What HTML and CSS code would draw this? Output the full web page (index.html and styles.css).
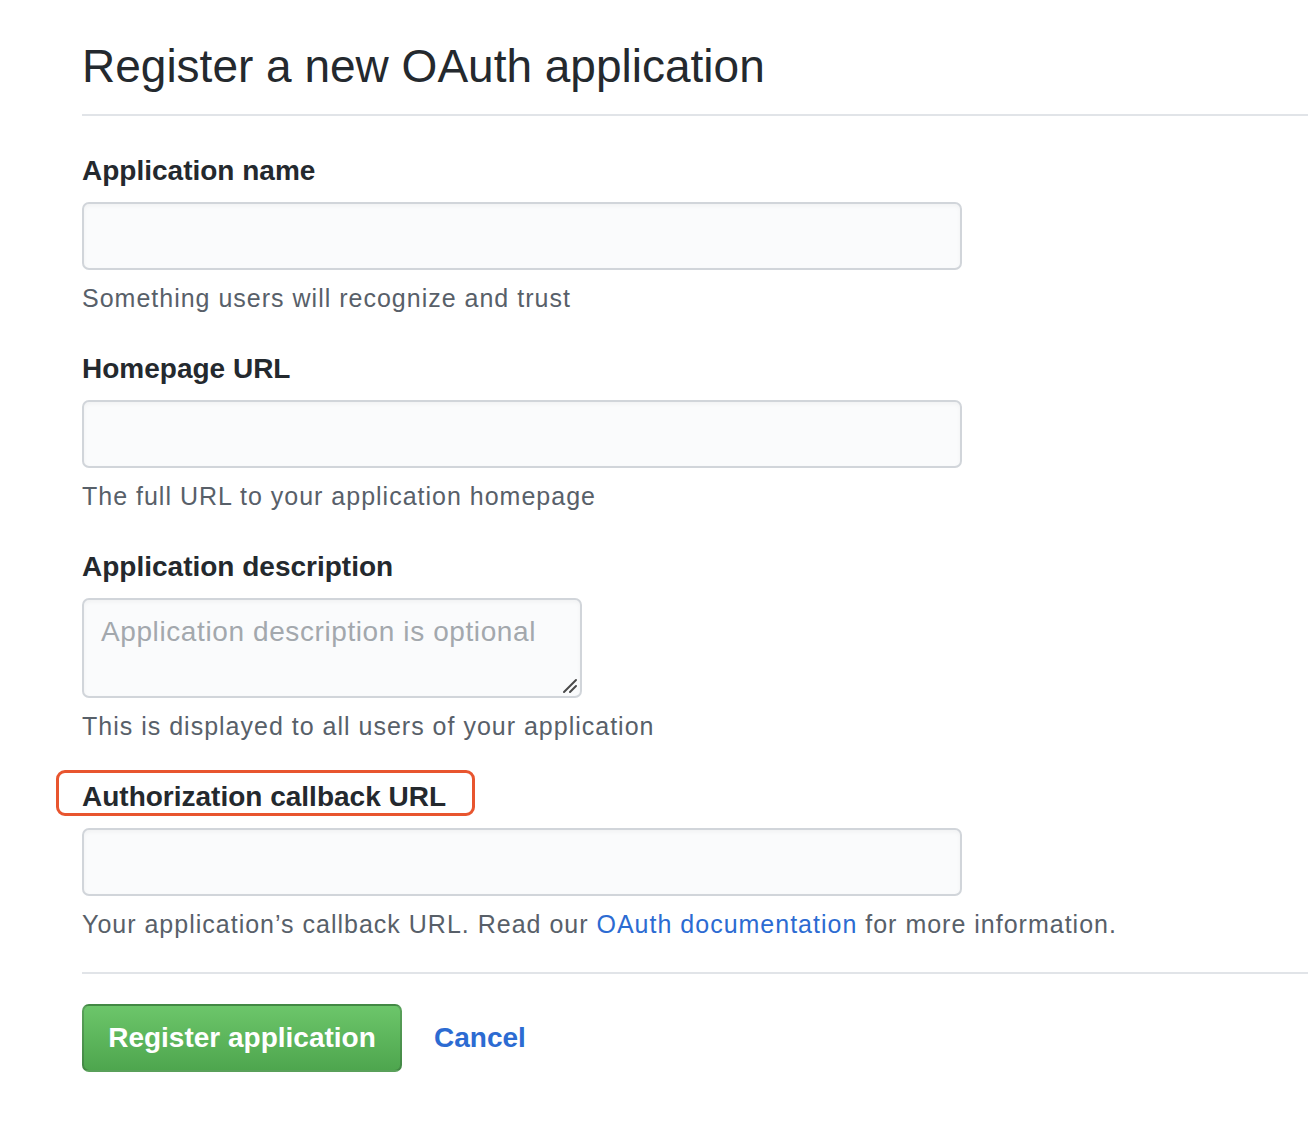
FILE: index.html
```html
<!DOCTYPE html>
<html lang="en">
<head>
<meta charset="utf-8">
<title>Register a new OAuth application</title>
<link rel="stylesheet" href="styles.css">
</head>
<body>
<div class="page">
  <div class="subhead">
    <h2 class="subhead-title">Register a new OAuth application</h2>
  </div>
  <form class="form">
    <div class="group">
      <label class="label" for="name">Application name</label>
      <input class="input" id="name" type="text">
      <p class="note">Something users will recognize and trust</p>
    </div>
    <div class="group">
      <label class="label" for="url">Homepage URL</label>
      <input class="input" id="url" type="text">
      <p class="note">The full URL to your application homepage</p>
    </div>
    <div class="group">
      <label class="label" for="desc">Application description</label>
      <div class="textarea-wrap">
        <textarea class="textarea" id="desc" placeholder="Application description is optional"></textarea>
        <svg class="grip" width="16" height="16" viewBox="0 0 16 16" aria-hidden="true">
          <path d="M2 14 L14 2 M8 14 L14 8" stroke="#4a4a4a" stroke-width="2" stroke-linecap="round" fill="none"/>
        </svg>
      </div>
      <p class="note">This is displayed to all users of your application</p>
    </div>
    <div class="group group-last">
      <label class="label label-marked" for="cb">Authorization callback URL</label>
      <input class="input" id="cb" type="text">
      <p class="note">Your application’s callback URL. Read our <a class="link" href="#">OAuth documentation</a> for more information.</p>
    </div>
    <div class="actions">
      <button class="btn-primary" type="button">Register application</button>
      <a class="cancel" href="#">Cancel</a>
    </div>
  </form>
</div>
</body>
</html>
```

FILE: styles.css
```css
*, *::before, *::after { box-sizing: border-box; }
html, body { margin: 0; padding: 0; background: #fff; }
body {
  font-family: "Liberation Sans", Arial, sans-serif;
  color: #24292e;
}
.page {
  padding: 36px 0 0 82px;
}
.subhead {
  border-bottom: 2px solid #e1e4e8;
  padding-bottom: 18px;
}
.subhead-title {
  margin: 0;
  font-size: 46px;
  font-weight: 400;
  line-height: 60px;
  color: #24292e;
}
.form {
  padding-top: 35px;
}
.group {
  display: flex;
  flex-direction: column;
  align-items: flex-start;
  margin-bottom: 34px;
}
.group-last { margin-bottom: 31px; }
.label {
  position: relative;
  display: inline-block;
  font-size: 28px;
  font-weight: 700;
  line-height: 40px;
  color: #24292e;
  margin-bottom: 11px;
}
.label-marked::after {
  content: "";
  position: absolute;
  left: -26px;
  top: -7px;
  width: 419px;
  height: 46px;
  border: 3.5px solid #e8552f;
  border-radius: 9px;
}
.input, .textarea {
  display: block;
  width: 880px;
  height: 68px;
  border: 2px solid #d1d5da;
  border-radius: 7px;
  background: #fafbfc;
  font-family: inherit;
  font-size: 28px;
  padding: 0 17px;
  margin: 0;
  outline: none;
  box-shadow: inset 0 2px 4px rgba(27,31,35,0.04);
}
.textarea-wrap {
  position: relative;
  width: 500px;
  height: 100px;
}
.textarea {
  width: 500px;
  height: 100px;
  padding: 14px 17px;
  line-height: 36px;
  letter-spacing: 0.6px;
  resize: none;
}
.textarea::placeholder { color: #a3a8ad; }
.grip {
  position: absolute;
  right: 4px;
  bottom: 4px;
}
.note {
  margin: 11px 0 0;
  font-size: 25px;
  line-height: 34px;
  letter-spacing: 1px;
  color: #586069;
}
.link {
  color: #2c6bd2;
  text-decoration: none;
}
.actions {
  border-top: 2px solid #e1e4e8;
  padding-top: 30px;
  display: flex;
  align-items: center;
  gap: 32px;
}
.btn-primary {
  width: 320px;
  height: 68px;
  border: 2px solid rgba(27,31,35,0.22);
  border-radius: 7px;
  background: linear-gradient(#6cc66a, #4ea64e);
  color: #fff;
  font-family: inherit;
  font-size: 28px;
  font-weight: 700;
  padding: 0;
  cursor: pointer;
}
.cancel {
  font-size: 28px;
  font-weight: 700;
  color: #2c6bd2;
  text-decoration: none;
}
```
